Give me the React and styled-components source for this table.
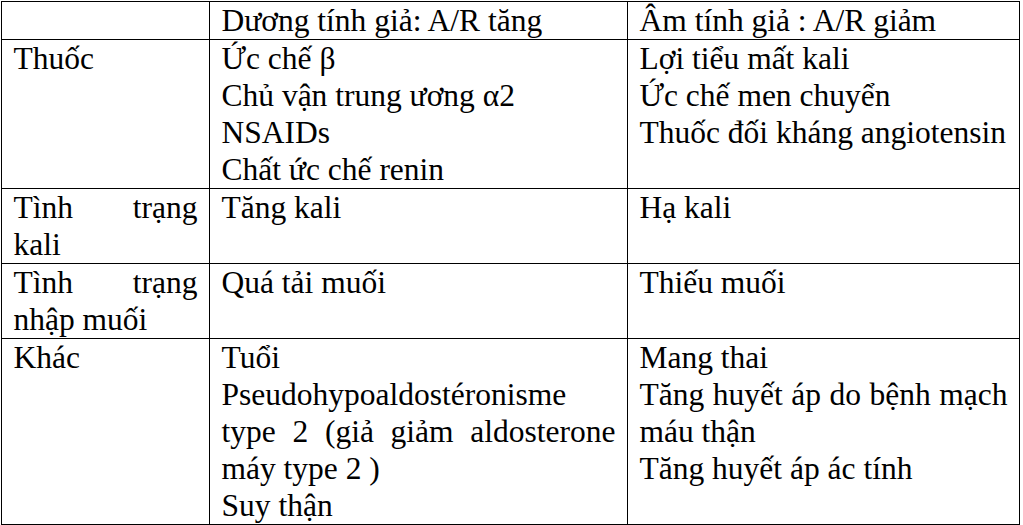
import React from 'react';
import styled, { createGlobalStyle } from 'styled-components';

const GlobalStyle = createGlobalStyle`
  html, body {
    margin: 0;
    padding: 0;
    background: #fff;
  }
`

const Page = styled.div`
  padding: 1px 0 0 1px;
  font-family: 'Liberation Serif', 'Times New Roman', serif;
  font-size: 31.5px;
  line-height: 37px;
  color: #000;
`

const Table = styled.table`
  width: 1019px;
  table-layout: fixed;
  border-collapse: separate;
  border-spacing: 0;
  border-top: 1px solid #000;
  border-left: 1px solid #000;
`

const Cell = styled.td`
  padding: 0 11.5px;
  vertical-align: top;
  text-align: justify;
  border-right: 1px solid #000;
  border-bottom: 1px solid #000;
`

const Line = styled.p`
  margin: 0;
`

const cols = [208, 418, 392]

const header = ['', 'Dương tính giả: A/R tăng', 'Âm tính giả : A/R giảm']

const rows = [
  {
    title: 'Thuốc',
    pos: ['Ức chế β', 'Chủ vận trung ương α2', 'NSAIDs', 'Chất ức chế renin'],
    neg: ['Lợi tiểu mất kali', 'Ức chế men chuyển', 'Thuốc đối kháng angiotensin'],
  },
  {
    title: 'Tình trạng kali',
    pos: ['Tăng kali'],
    neg: ['Hạ kali'],
  },
  {
    title: 'Tình trạng nhập muối',
    pos: ['Quá tải muối'],
    neg: ['Thiếu muối'],
  },
  {
    title: 'Khác',
    pos: [
      'Tuổi',
      'Pseudohypoaldostéronisme',
      'type 2 (giả giảm aldosterone máy type 2 )',
      'Suy thận',
    ],
    neg: ['Mang thai', 'Tăng huyết áp do bệnh mạch máu thận', 'Tăng huyết áp ác tính'],
  },
]

const Lines = ({ items }) => items.map((t, i) => <Line key={i}>{t}</Line>)

export default function App() {
  return (
    <Page>
      <GlobalStyle />
      <Table>
        <colgroup>
          {cols.map((w, i) => <col key={i} style={{ width: w }} />)}
        </colgroup>
        <tbody>
          <tr>
            {header.map((h, i) => <Cell key={i}>{h}</Cell>)}
          </tr>
          {rows.map((r) => (
            <tr key={r.title}>
              <Cell>{r.title}</Cell>
              <Cell><Lines items={r.pos} /></Cell>
              <Cell><Lines items={r.neg} /></Cell>
            </tr>
          ))}
        </tbody>
      </Table>
    </Page>
  )
}
